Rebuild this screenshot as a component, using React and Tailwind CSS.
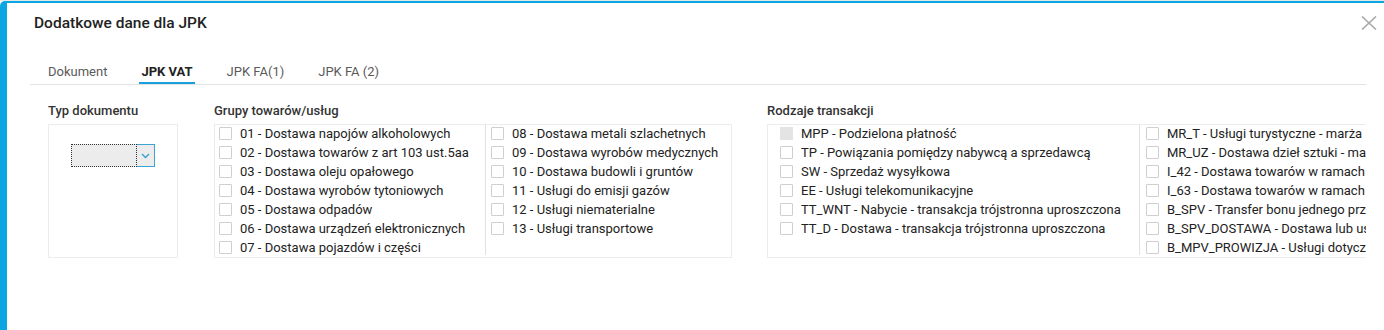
import React from "react";

const groupsLeft = [
  "01 - Dostawa napojów alkoholowych",
  "02 - Dostawa towarów z art 103 ust.5aa",
  "03 - Dostawa oleju opałowego",
  "04 - Dostawa wyrobów tytoniowych",
  "05 - Dostawa odpadów",
  "06 - Dostawa urządzeń elektronicznych",
  "07 - Dostawa pojazdów i części",
];

const groupsRight = [
  "08 - Dostawa metali szlachetnych",
  "09 - Dostawa wyrobów medycznych",
  "10 - Dostawa budowli i gruntów",
  "11 - Usługi do emisji gazów",
  "12 - Usługi niematerialne",
  "13 - Usługi transportowe",
];

const transLeft = [
  { label: "MPP - Podzielona płatność", disabled: true },
  { label: "TP - Powiązania pomiędzy nabywcą a sprzedawcą" },
  { label: "SW - Sprzedaż wysyłkowa" },
  { label: "EE - Usługi telekomunikacyjne" },
  { label: "TT_WNT - Nabycie - transakcja trójstronna uproszczona" },
  { label: "TT_D - Dostawa - transakcja trójstronna uproszczona" },
];

const transRight = [
  "MR_T - Usługi turystyczne - marża",
  "MR_UZ - Dostawa dzieł sztuki - marża",
  "I_42 - Dostawa towarów w ramach procedury celnej 42",
  "I_63 - Dostawa towarów w ramach procedury celnej 63",
  "B_SPV - Transfer bonu jednego przeznaczenia",
  "B_SPV_DOSTAWA - Dostawa lub usługa bonu",
  "B_MPV_PROWIZJA - Usługi dotyczące bonu",
];

const tabs = ["Dokument", "JPK VAT", "JPK FA(1)", "JPK FA (2)"];

const CheckRow = ({ label, disabled }) => (
  <div className="flex h-[19px] items-center gap-[8px] whitespace-nowrap">
    <span
      className={
        disabled
          ? "h-[13px] w-[13px] shrink-0 border border-[#e4e4e4] bg-[#e4e4e4]"
          : "h-[13px] w-[13px] shrink-0 rounded-[1px] border border-[#cfcfcf] bg-white"
      }
    />
    <span className="text-[13px] leading-[16px] text-[#222]">{label}</span>
  </div>
);

const Section = ({ title, className, children }) => (
  <div className={className}>
    <div className="mb-[5px] text-[13px] font-medium leading-[16px] text-[#333]">{title}</div>
    {children}
  </div>
);

export default function App() {
  return (
    <div className="h-[330px] w-[1384px] overflow-hidden bg-white font-['Roboto',sans-serif]">
      <div className="h-px bg-[#e3e8eb]" />
      <div className="h-[329px] rounded-tl-[5px] border-t-2 border-l-[7px] border-[#0aa6e2] bg-white">
        {/* Header */}
        <div className="flex items-center justify-between pt-[11px] pl-[27px] pr-[7px]">
          <h1 className="text-[15.5px] font-medium leading-[18px] text-[#222]">Dodatkowe dane dla JPK</h1>
          <svg width="16" height="14" viewBox="0 0 16 14" className="text-[#a9a9a9]">
            <path d="M1 0.5 L15 13.5 M15 0.5 L1 13.5" stroke="currentColor" strokeWidth="1.6" fill="none" />
          </svg>
        </div>

        {/* Tabs */}
        <div className="ml-[23px] mt-[32px] flex w-[1336px] gap-[30px] border-b border-[#e2e2e2] pl-[16px]">
          {tabs.map((t) => {
            const active = t === "JPK VAT";
            return (
              <div key={t} className="flex flex-col">
                <span
                  className={
                    active
                      ? "px-[2px] text-[13px] font-bold leading-[16px] text-[#222]"
                      : "px-[2px] text-[13px] leading-[16px] text-[#5a5a5a]"
                  }
                >
                  {t}
                </span>
                <span className={active ? "mt-[2px] h-[2px] bg-[#1aa0dc]" : "mt-[2px] h-[2px]"} />
              </div>
            );
          })}
        </div>

        {/* Content */}
        <div className="ml-[41px] mt-[18px] flex items-start">
          <Section title="Typ dokumentu" className="w-[130px]">
            <div className="flex h-[134px] justify-center border border-[#ececec] pt-[19px]">
              <div className="flex h-[23px] w-[84px] bg-[#ececec]">
                <div className="w-[66px] border border-dotted border-[#333]" />
                <div className="flex flex-1 items-center justify-center border border-l-0 border-[#3ba4d5]">
                  <svg width="9" height="6" viewBox="0 0 9 6">
                    <path d="M1 1 L4.5 4.5 L8 1" stroke="#2f9fd2" strokeWidth="1.3" fill="none" />
                  </svg>
                </div>
              </div>
            </div>
          </Section>

          <Section title="Grupy towarów/usług" className="ml-[36px] w-[518px]">
            <div className="flex h-[134px] border border-[#ececec]">
              <div className="-mt-[1px] mb-[2px] w-[271px] border-r border-[#e2e2e2] pl-[4px]">
                {groupsLeft.map((g) => (
                  <CheckRow key={g} label={g} />
                ))}
              </div>
              <div className="-mt-[1px] pl-[5px]">
                {groupsRight.map((g) => (
                  <CheckRow key={g} label={g} />
                ))}
              </div>
            </div>
          </Section>

          <Section title="Rodzaje transakcji" className="ml-[35px] w-[599px]">
            <div className="flex h-[134px] overflow-hidden border border-r-0 border-[#ececec]">
              <div className="-mt-[1px] mb-[2px] w-[372px] shrink-0 border-r border-[#e2e2e2] pl-[12px]">
                {transLeft.map((t) => (
                  <CheckRow key={t.label} label={t.label} disabled={t.disabled} />
                ))}
              </div>
              <div className="-mt-[1px] min-w-0 pl-[6px]">
                {transRight.map((t) => (
                  <CheckRow key={t} label={t} />
                ))}
              </div>
            </div>
          </Section>
        </div>
      </div>
    </div>
  );
}
